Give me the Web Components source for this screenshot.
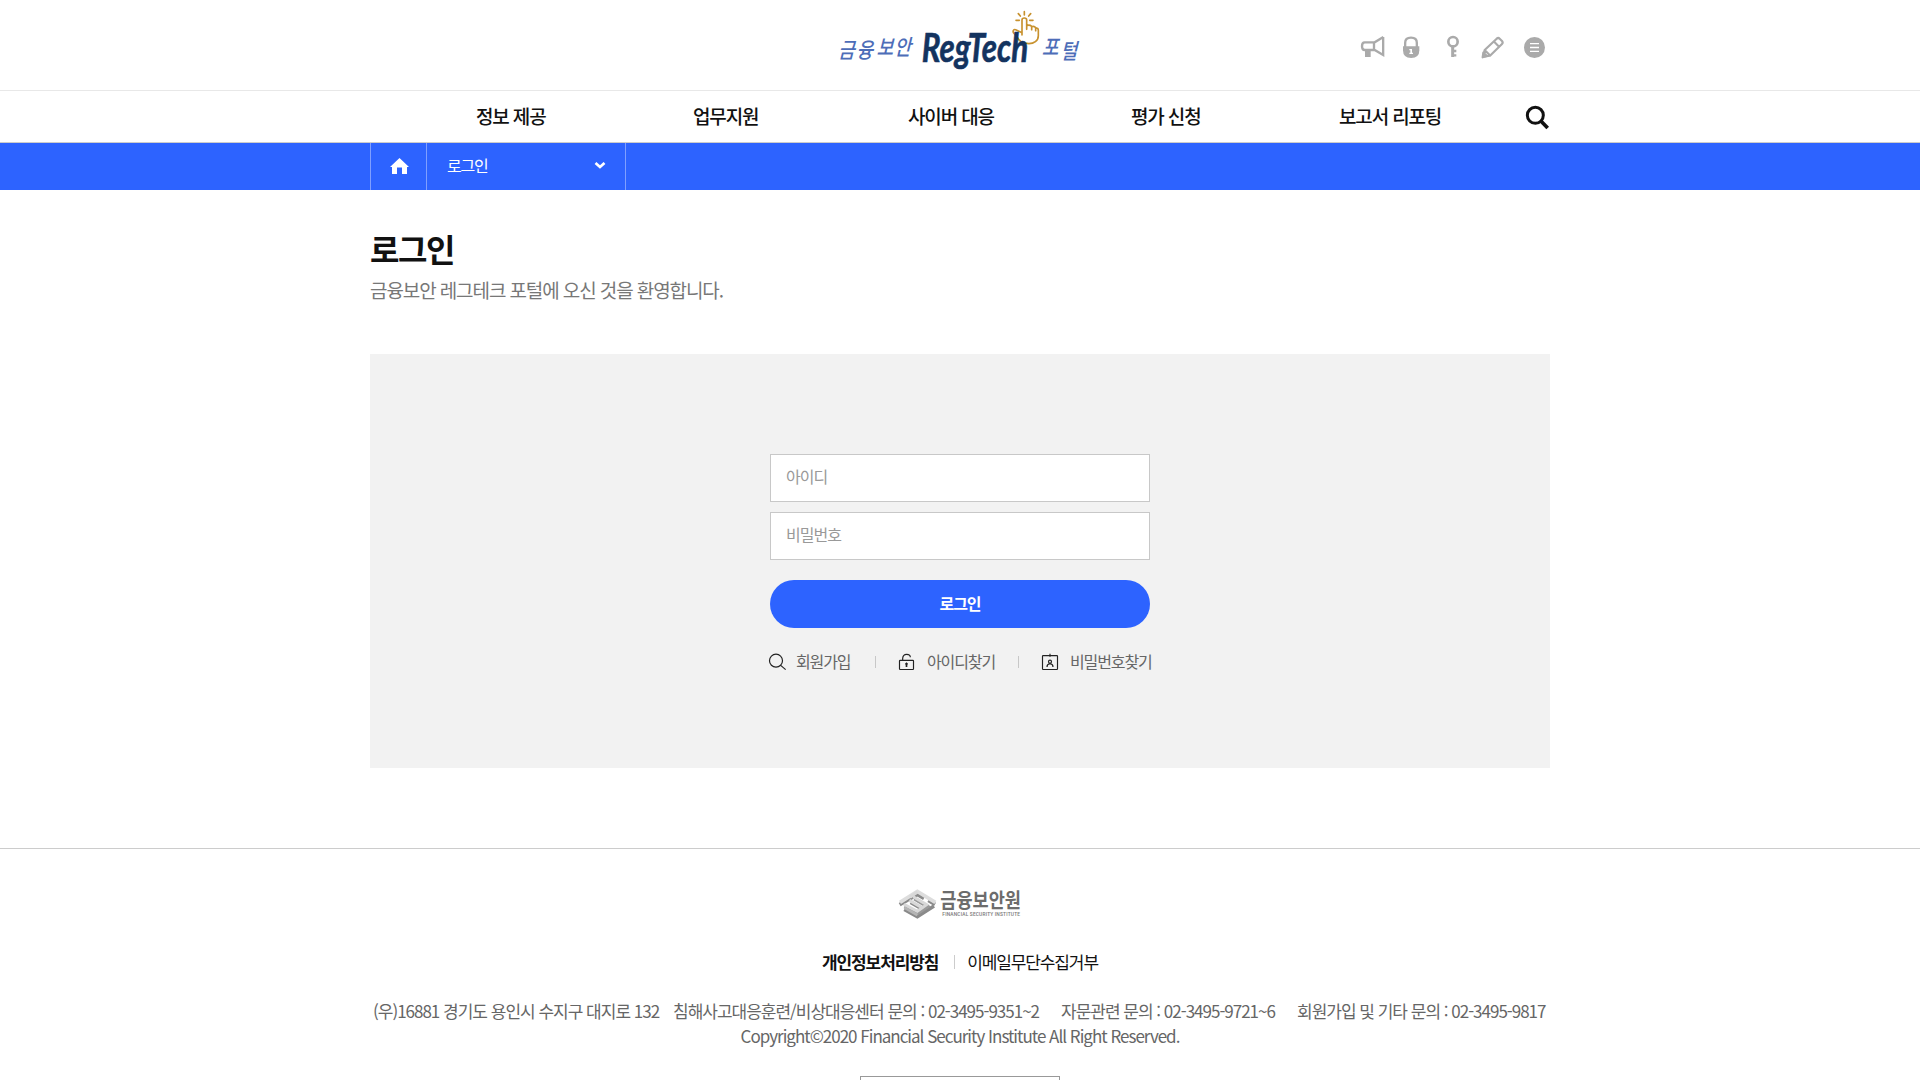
<!DOCTYPE html>
<html lang="ko">
<head>
<meta charset="utf-8">
<title>로그인</title>
<style>
html,body{margin:0;padding:0;height:1080px;overflow:hidden;background:#fff}
body{font-family:"Noto Sans CJK KR","Noto Sans",sans-serif;font-size:17px;letter-spacing:-1px;color:#111}
</style>
</head>
<body>
<portal-page></portal-page>
<script>
const def=(name,html)=>{
  const t=document.createElement('template');t.innerHTML=html;
  customElements.define(name,class extends HTMLElement{
    constructor(){super();this.attachShadow({mode:'open'}).append(t.content.cloneNode(true));}
  });
};

/* wordmark: set as real text, slanted, with the pointing hand over it */
def('portal-logo',`<style>:host{display:block;width:280px;height:90px;letter-spacing:0}svg{display:block}
.k{font-family:"Noto Sans CJK KR",sans-serif;font-weight:500;fill:#4d6db8}
.r{font-family:Lato,"Noto Sans",sans-serif;font-style:italic;font-weight:700;fill:#13335f;stroke:#13335f;stroke-width:2}</style>
<svg width="280" height="90" viewBox="0 0 840 270">
<g fill="none" stroke="#c8922f" stroke-width="5" stroke-linecap="round" stroke-linejoin="round">
<path d="M613 35v10M595 41l6 7M632 41l-6 7M588 61h10M629 61h10"/>
<path d="M606 105V60q0-6 7-6t7 6v28V77q8-4 15 2v10-9q8-3 12 3v9-7q8-2 8 6v16c0 16-14 24-28 24-20 0-28-6-36-20l-10-12c-4-6 0-12 6-10l16 8"/>
</g>
<g transform="translate(0 172) skewX(-14) scale(1 1.2)"><text class="k" font-size="54" x="54 109 168 221" y="1 1 -5 -5">금융보안</text>
<text class="k" font-size="54" x="664 722" y="-5 5">포털</text></g>
<text class="r" x="305" y="187" font-size="122" textLength="320" lengthAdjust="spacingAndGlyphs">RegTech</text>
</svg>`);

def('util-icons',`<style>:host{display:flex;align-items:flex-start}svg{display:block;flex:none}
svg+svg{margin-left:17px}svg:nth-of-type(3){margin-left:26px}svg:nth-of-type(4){margin-left:20px}svg:nth-of-type(5){margin-left:18px}</style>
<svg width="25" height="24" viewBox="60 45 75 72" fill="none" stroke="#aaa" stroke-width="7"><path d="M129.500 51v54L104 90H74q-8 0-8-11.500t8-11.500h30l26-16M102 67v24"/><path d="M75 90h17v21H75z" fill="#aaa" stroke="none"/></svg>
<svg width="18" height="24" viewBox="186 45 54 72"><path d="M195.500 81V68q0-15 17.500-15t17.500 15v13" fill="none" stroke="#aaa" stroke-width="7"/><path d="M189 79h49v12q0 23-24.500 23T189 91z" fill="#aaa"/><path d="M208 87h8v11h3v4h-11v-4h3v-7h-3z" fill="#fff"/></svg>
<svg width="14" height="24" viewBox="318 45 42 72" fill="none" stroke="#aaa" stroke-width="8"><circle cx="339" cy="65" r="14"/><path d="M338 80v31" stroke-width="9"/><path d="M340 93h9M340 106h9" stroke-width="7"/></svg>
<svg width="25" height="24" viewBox="420 45 75 72" fill="none" stroke="#aaa" stroke-width="6.500" stroke-linejoin="round"><path d="M429 110l5-20 36-34q5-4 9 0l7 7q4 5 0 9l-36 35zM434 90l17 17M461 64l17 17"/><path d="M428 112l2-14 11 10z" fill="#aaa"/></svg>
<svg width="23" height="24" viewBox="549 45 69 72"><circle cx="583.500" cy="82.500" r="31.500" fill="#aaa"/><path d="M570 71h27M570 82.500h27M570 94h27" stroke="#fff" stroke-width="4"/></svg>`);

def('site-header',`<style>:host{display:block}
.top{box-sizing:border-box;height:91px;border-bottom:1px solid #e8e8e8}
.in{width:1180px;margin:0 auto;display:grid;grid-template-columns:450px 280px 1fr}
portal-logo{grid-column:2}
util-icons{justify-self:end;margin:35px 4px 0 0}
.nav{box-sizing:border-box;height:52px;border-bottom:1px solid #ccc}
nav{width:1180px;height:51px;margin:0 auto;display:flex;align-items:flex-start;font-size:19px;line-height:49px;font-weight:500;letter-spacing:-1.150px;color:#111}
a{flex:none;white-space:nowrap}svg{flex:none;display:block;margin:14px 0 0 auto}
</style>
<div class="top"><div class="in"><portal-logo></portal-logo><util-icons></util-icons></div></div>
<div class="nav"><nav><a style="margin-left:106px;width:217px">정보 제공</a><a style="width:215px">업무지원</a><a style="width:223px">사이버 대응</a><a style="width:208px">평가 신청</a><a>보고서 리포팅</a>
<svg width="25" height="25" viewBox="555 255 75 75" fill="none" stroke="#111"><circle cx="586" cy="286" r="24" stroke-width="9"/><path d="M602 302l21 22" stroke-width="11"/></svg></nav></div>`);

def('bread-crumb',`<style>:host{display:block;height:47px;background:#2d63ff;color:#fff}
.in{width:1180px;height:47px;margin:0 auto;display:flex}
.h{box-sizing:border-box;width:56px;border-left:1px solid #7f9fff;padding:15px 0 0 19px}
.c{box-sizing:border-box;width:200px;border:solid #7f9fff;border-width:0 1px;padding:0 19px 0 20px;display:flex;justify-content:space-between;font-size:16px;letter-spacing:-1.200px;line-height:44px}
svg{display:block}.c svg{margin-top:19px}</style>
<div class="in"><div class="h"><svg width="19" height="17" viewBox="0 0 19 17"><path d="M9.500 0L0 9h2v7h5V9.500h5V16h5V9h2z" fill="#fff"/></svg></div>
<div class="c"><span>로그인</span><svg width="12" height="8" viewBox="0 0 12 8"><path d="M1.500 1L6 4.900l4.500-3.900" fill="none" stroke="#fff" stroke-width="2.700"/></svg></div></div>`);

def('page-title',`<style>:host{display:block;padding-top:34px}
h1{margin:0;font-size:32px;line-height:48px;font-weight:700;letter-spacing:-1.500px;color:#111}
p{margin:4px 0 0;font-size:19px;line-height:27px;letter-spacing:-1.100px;color:#777}</style>
<h1><slot name="title"></slot></h1><p><slot></slot></p>`);

def('text-field',`<style>:host{display:block;box-sizing:border-box;height:48px;border:1px solid #c8c8c8;background:#fff;padding:0 15px;font-size:16px;line-height:43px;color:#999}</style><slot></slot>`);
def('login-button',`<style>:host{display:block;height:48px;border-radius:24px;background:#2d63ff;color:#fff;font-size:16px;line-height:46px;font-weight:700;text-align:center}</style><slot></slot>`);

def('login-form',`<style>:host{display:flex;flex-direction:column;width:380px;gap:10px}
login-button{margin-top:10px}
.l{display:flex;align-items:center;margin:9px -6px 0 -2px;height:30px;font-size:16px;letter-spacing:-1.100px;line-height:30px;color:#666;white-space:nowrap}
.l svg{flex:none;margin-top:-1px}.l span{flex:none;margin-top:-3px}
i{flex:none;width:1px;height:12px;background:#c8c8c8}</style>
<text-field>아이디</text-field><text-field>비밀번호</text-field><login-button>로그인</login-button>
<div class="l">
<svg width="19" height="18" viewBox="54 639 57 54" fill="none" stroke="#222" stroke-width="3.500"><circle cx="78" cy="662" r="19.500"/><path d="M92 676l15 13"/></svg><span style="margin-left:9px;width:79px">회원가입</span><i></i>
<svg style="margin-left:22px" width="17" height="18" viewBox="444 639 51 54" fill="none" stroke="#222" stroke-width="3.500"><rect x="448.500" y="661" width="42" height="27.500" rx="2"/><path d="M458 660v-5q1-12 12-12t11 9"/><path d="M465 671l4.500-4 4.500 4-2 4v6h-5v-6z" fill="#222" stroke="none"/></svg><span style="margin-left:12px;width:91px">아이디찾기</span><i></i>
<svg style="margin-left:22px" width="18" height="18" viewBox="873 639 54 54" fill="none" stroke="#222" stroke-width="3.500"><rect x="877.500" y="647" width="45" height="41.500" rx="2"/><path d="M900 641v9"/><circle cx="900" cy="665" r="4.500"/><path d="M891 681q0-9 9-10 9 1 9 10"/></svg><span style="margin-left:11px">비밀번호찾기</span>
</div>`);

def('fsi-logo',`<style>:host{display:block;width:125px;height:31px;letter-spacing:0}svg{display:block;overflow:visible}</style>
<svg width="125" height="31" viewBox="54 144 375 93">
<g fill="none" stroke-width="11">
<path d="M59 194L112 163l20 12M92 187l37 21M165 193l-20-12" stroke="#8a8a8a"/>
<path d="M73 208l39 22 50-32" stroke="#8a8a8a"/>
<path d="M103 176l40 24-31 20-38-22" stroke="#999" />
<path d="M60 187l52-33 54 33" stroke="#ddd"/>
<path d="M112 156L90 172M88 181l38 22M100 170l40 24-28 20-40-21" stroke="#d8d8d8" stroke-width="9"/>
<path d="M73 203l39 22" stroke="#b5b5b5" stroke-width="8"/>
</g>
<text x="181" y="204" font-size="62" font-weight="700" fill="#6c6c6c" font-family="Noto Sans CJK KR" textLength="242" lengthAdjust="spacingAndGlyphs">금융보안원</text>
<text x="187" y="228" font-size="14.500" font-weight="500" fill="#777" font-family="Roboto" textLength="233">FINANCIAL SECURITY INSTITUTE</text>
</svg>`);

def('site-footer',`<style>:host{display:flex;flex-direction:column;align-items:center;border-top:1px solid #ccc;margin-top:80px}
fsi-logo{margin:39px 0 0 1px}
.p{display:flex;align-items:center;margin-top:31px;height:24px;color:#111;letter-spacing:-1.120px;white-space:nowrap}
.p i{width:1px;height:14px;background:#ccc;margin:0 12px 0 16px}
.p b{font-weight:700}.p>span,.p>b{line-height:24px;margin-top:-1px}
address{font-style:normal;margin-top:24px;line-height:25px;color:#666;text-align:center;white-space:nowrap}
.a{display:flex;justify-content:center;text-align:left}
.s{box-sizing:border-box;width:200px;height:40px;border:1px solid #999;margin-top:28px}</style>
<fsi-logo></fsi-logo>
<div class="p"><b>개인정보처리방침</b><i></i><span>이메일무단수집거부</span></div>
<address><div class="a"><span style="width:300px">(우)16881 경기도 용인시 수지구 대지로 132</span><span style="width:388px">침해사고대응훈련/비상대응센터 문의 : 02-3495-9351~2</span><span style="width:236px">자문관련 문의 : 02-3495-9721~6</span><span style="width:250px">회원가입 및 기타 문의 : 02-3495-9817</span></div>
<div>Copyright©2020 Financial Security Institute All Right Reserved.</div></address>
<div class="s"></div>`);

def('portal-page',`<style>:host{display:block;width:1920px;height:1080px;overflow:hidden}
main{width:1180px;height:578px;margin:0 auto}
.box{box-sizing:border-box;height:414px;margin-top:51px;background:#f2f2f2;padding-top:100px;display:flex;justify-content:center;align-items:flex-start}</style>
<site-header></site-header><bread-crumb></bread-crumb>
<main><page-title><span slot="title">로그인</span>금융보안 레그테크 포털에 오신 것을 환영합니다.</page-title>
<div class="box"><login-form></login-form></div></main>
<site-footer></site-footer>`);
</script>
</body>
</html>
